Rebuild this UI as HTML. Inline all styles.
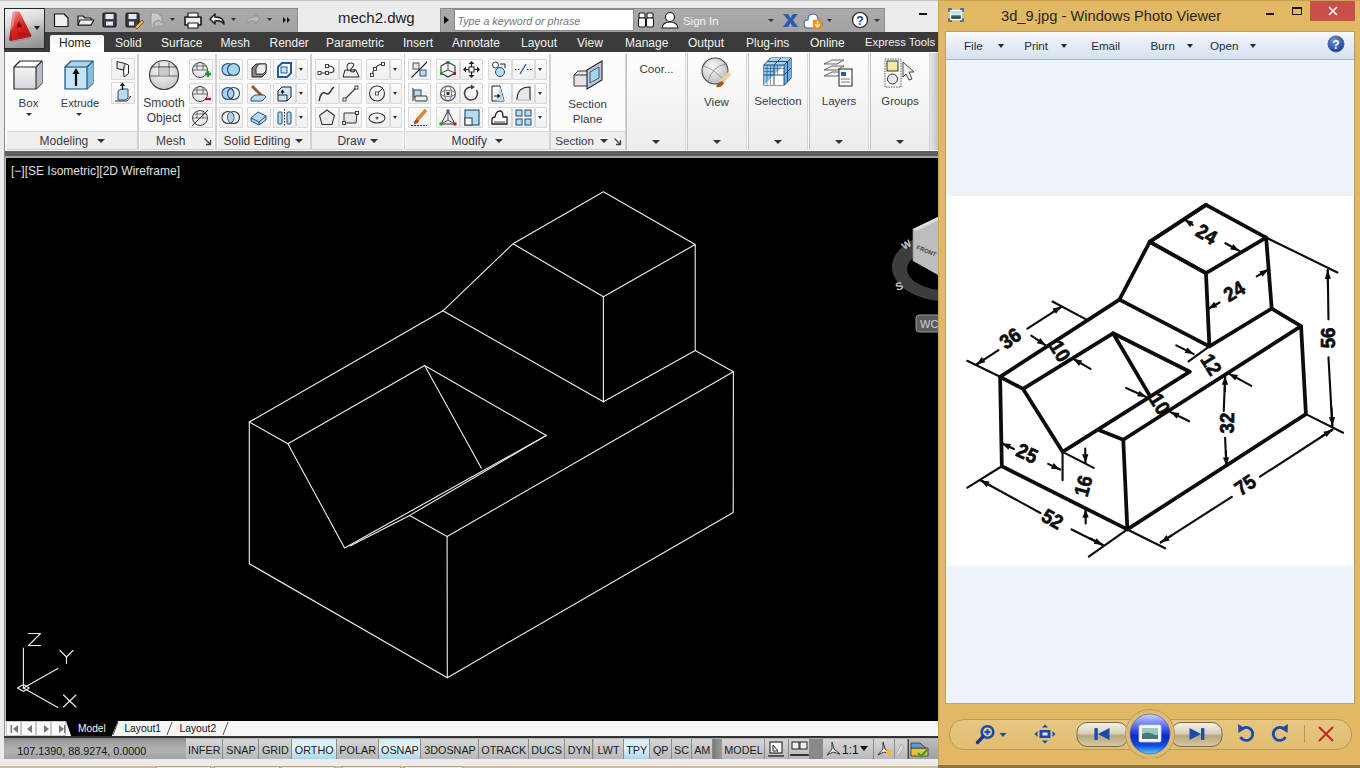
<!DOCTYPE html>
<html><head><meta charset="utf-8">
<style>
*{margin:0;padding:0;box-sizing:border-box}
html,body{width:1360px;height:768px;overflow:hidden;background:#ececec;font-family:"Liberation Sans",sans-serif;position:relative}
.a{position:absolute}
.t{position:absolute;white-space:nowrap;line-height:1}
</style></head><body>
<div class="a" style="left:0;top:0;width:938px;height:1px;background:#c4c4c4"></div>
<div class="a" style="left:45px;top:8px;width:253px;height:24px;background:linear-gradient(#aaaaaa,#a3a3a3);border-top:1px solid #8a8a8a;border-right:1px solid #8e8e8e"></div>
<svg class="a" style="left:45px;top:8px" width="253" height="24" viewBox="0 0 253 24">
      <g stroke="#1a1a1a" stroke-width="1.2" fill="#eef0f4" stroke-linejoin="round">
        <path d="M9.5,6 H19 L23,10 V18.5 H9.5 Z"/>
        <path d="M33,8 H38 L40,10 H46 V17 H33 Z" fill="#d8dade"/><path d="M35,12 H49 L46,17 H33 Z"/>
        <rect x="58" y="5" width="13" height="14" rx="1.5" fill="#3a3d48"/><rect x="60.5" y="6" width="8" height="5" fill="#e4e8f0" stroke="none"/><rect x="61" y="13.5" width="7" height="4" fill="#e4e8f0" stroke="none"/>
        <rect x="81" y="5" width="13" height="14" rx="1.5" fill="#3a3d48"/><rect x="83.5" y="6" width="8" height="5" fill="#e4e8f0" stroke="none"/><rect x="84" y="13.5" width="5" height="4" fill="#e4e8f0" stroke="none"/>
        <path d="M90,19 L97,12 L99,14 L92,21 Z" fill="#f0b030" stroke="#6a4a10" stroke-width="0.8"/>
        <path d="M106,5 H113 L117,9 V19 H106 Z" fill="#c8c8c8" stroke="#9a9a9a"/><path d="M110,14 Q113,11 116,14 Q120,14 119,18 H109 Q107,17 110,14Z" fill="#bdbdbd" stroke="#9a9a9a"/>
        <path d="M140,9 H156 V17 H140 Z" fill="#eee" stroke-width="1.6"/><rect x="143" y="5" width="10" height="4" fill="#fff"/><rect x="143" y="15" width="10" height="5" fill="#fff"/>
        <path d="M165,11 L170,6 V9 Q179,9 179,16 Q176,12 170,13 V16 Z" fill="#f4f4f4" stroke-width="1.4"/>
        <path d="M215,11 L210,6 V9 Q201,9 201,16 Q204,12 210,13 V16 Z" fill="#bdbdbd" stroke="#9a9a9a"/>
      </g>
      <g fill="#333">
        <path d="M125,10 h5 l-2.5,3z"/><path d="M186,10 h5 l-2.5,3z"/><path d="M222,10 h5 l-2.5,3z"/>
        <path d="M238,9 l3,3 l-3,3z M242,9 l3,3 l-3,3z" fill="#111"/>
      </g>
    </svg>
<div class="t" style="left:338px;top:9.9px;font-size:15px;color:#1a1a1a;">mech2.dwg</div>
<div class="a" style="left:440px;top:8px;width:445px;height:24px;background:linear-gradient(#aaaaaa,#a3a3a3);border-top:1px solid #8a8a8a;border-left:1px solid #8e8e8e;border-right:1px solid #8e8e8e"></div>
<div class="a" style="left:444px;top:16px;width:0;height:0;border-top:4px solid transparent;border-bottom:4px solid transparent;border-left:5px solid #111"></div>
<div class="a" style="left:454px;top:9px;width:180px;height:21.5px;background:#fff;border:1px solid #8a8a8a"></div>
<div class="t" style="left:457.5px;top:16.4px;font-size:10.7px;color:#767676;font-style:italic">Type a keyword or phrase</div>
<svg class="a" style="left:630px;top:8px" width="260" height="24" viewBox="0 0 260 24">
      <g stroke="#1a1a1a" stroke-width="1.1" fill="#fff">
        <rect x="9" y="5" width="6" height="5" rx="1"/><rect x="17" y="5" width="6" height="5" rx="1"/>
        <rect x="8.5" y="10" width="7" height="9" rx="1.5"/><rect x="16.5" y="10" width="7" height="9" rx="1.5"/>
        <circle cx="40" cy="9" r="4.5"/><path d="M32,20 Q33,14 40,14 Q47,14 48,20 Z"/>
      </g>
      <path d="M138,11 h6 l-3,3z" fill="#333"/>
      <path d="M153,6 h5 l2.5,4 l2.5,-4 h5 l-5,6 l5,7 h-5 l-2.5,-4 l-2.5,4 h-5 l5,-7z" fill="#2a5db0"/>
      <path d="M178,12 q0,-6 5,-6 q5,0 5,6 q4,0 4,4 q0,4 -4,4 h-10 q-4,0 -4,-4 q0,-4 4,-4z" fill="#fff" stroke="#3a66b0" stroke-width="1.1"/>
      <rect x="183" y="12" width="9" height="9" fill="#f08a20"/><path d="M187.5,13 v5 M185,16 l2.5,3 l2.5,-3" stroke="#fff" stroke-width="1.3" fill="none"/>
      <path d="M197,11 h5 l-2.5,3z" fill="#333"/>
      <circle cx="230" cy="12" r="7.5" fill="#fff" stroke="#1a1a1a" stroke-width="1.2"/>
      <text x="230" y="16.5" font-family="Liberation Sans" font-weight="bold" font-size="12" text-anchor="middle" fill="#1a3a8a">?</text>
      <path d="M244,11 h6 l-3,3z" fill="#333"/>
    </svg>
<div class="t" style="left:683px;top:15.8px;font-size:11.4px;color:#f4f4f4;">Sign In</div>
<div class="a" style="left:919px;top:13px;width:8px;height:2px;background:#111"></div>
<div class="a" style="left:4px;top:32px;width:934px;height:20px;background:#3b3b3b"></div>
<div class="a" style="left:50px;top:35px;width:54px;height:17px;background:linear-gradient(#f4f4f4,#ffffff);border-radius:2px 2px 0 0"></div>
<div class="t" style="left:59px;top:36.8px;font-size:12px;color:#1e1e2a;">Home</div>
<div class="a" style="left:4px;top:8px;width:41px;height:41px;background:linear-gradient(165deg,#f4f4f4,#dcdcdc 35%,#b4b4b4 60%,#9a9a9a 85%,#8e8e8e);border:1.5px solid #262626"></div>
<svg class="a" style="left:0;top:0" width="50" height="50" viewBox="0 0 50 50">
      <defs><linearGradient id="ag" x1="0" y1="0" x2="0.5" y2="1"><stop offset="0" stop-color="#f6a8a8"/><stop offset="0.35" stop-color="#e45050"/><stop offset="0.6" stop-color="#d82424"/><stop offset="1" stop-color="#b81818"/></linearGradient></defs>
      <path d="M10,41.5 L30,37.5 L31,38.5 L11,42.5Z" fill="#7a5a5a" opacity="0.35"/>
      <path d="M12.5,12.5 Q13,11.5 15,11.5 H18.5 Q19.5,11.5 20,12.5 L31.5,35.5 Q31.5,36.5 30,37 L11,41 Q9,41 9.2,39.5 Z" fill="url(#ag)"/>
      <path d="M12.5,12.5 Q13,11.5 15,11.5 L14,24 L10.5,31Z" fill="#f8b8b8" opacity="0.5"/>
      <path d="M16.5,27.5 L18.5,21 L22.5,27 Z" fill="#8a0c0c"/>
      <path d="M17.5,33 L24.5,32 L25.5,36.5 L18.5,37.5 Z" fill="#b81414"/>
      <path d="M9.2,39.5 L11,30 L12,40.5Z" fill="#8a0c0c" opacity="0.5"/>
    </svg>
<div class="a" style="left:34.0px;top:25.5px;width:0;height:0;border-left:3.5px solid transparent;border-right:3.5px solid transparent;border-top:4px solid #1e1e1e"></div>
<div class="t" style="left:115px;top:36.8px;font-size:12px;color:#f2f2f2;">Solid</div>
<div class="t" style="left:161px;top:36.8px;font-size:12px;color:#f2f2f2;">Surface</div>
<div class="t" style="left:220.5px;top:36.8px;font-size:12px;color:#f2f2f2;">Mesh</div>
<div class="t" style="left:269.5px;top:36.8px;font-size:12px;color:#f2f2f2;">Render</div>
<div class="t" style="left:326px;top:36.8px;font-size:12px;color:#f2f2f2;">Parametric</div>
<div class="t" style="left:403px;top:36.8px;font-size:12px;color:#f2f2f2;">Insert</div>
<div class="t" style="left:452px;top:36.8px;font-size:12px;color:#f2f2f2;">Annotate</div>
<div class="t" style="left:521px;top:36.8px;font-size:12px;color:#f2f2f2;">Layout</div>
<div class="t" style="left:577px;top:36.8px;font-size:12px;color:#f2f2f2;">View</div>
<div class="t" style="left:625px;top:36.8px;font-size:12px;color:#f2f2f2;">Manage</div>
<div class="t" style="left:688px;top:36.8px;font-size:12px;color:#f2f2f2;">Output</div>
<div class="t" style="left:746px;top:36.8px;font-size:12px;color:#f2f2f2;">Plug-ins</div>
<div class="t" style="left:810px;top:36.8px;font-size:12px;color:#f2f2f2;">Online</div>
<div class="t" style="left:865px;top:37.4px;font-size:11.3px;color:#f2f2f2;">Express Tools</div>
<div class="a" style="left:4px;top:52px;width:934px;height:99px;background:#fcfcfc"></div>
<div class="a" style="left:4px;top:52px;width:1px;height:99px;background:#8c8c8c"></div>
<div class="a" style="left:7px;top:131px;width:129.5px;height:18.5px;background:#efefef;border-top:1px solid #d8d8d8;border-bottom:1px solid #cfcfcf"></div>
<div class="a" style="left:139.5px;top:131px;width:74.5px;height:18.5px;background:#efefef;border-top:1px solid #d8d8d8;border-bottom:1px solid #cfcfcf"></div>
<div class="a" style="left:217.5px;top:131px;width:92.0px;height:18.5px;background:#efefef;border-top:1px solid #d8d8d8;border-bottom:1px solid #cfcfcf"></div>
<div class="a" style="left:312px;top:131px;width:91px;height:18.5px;background:#efefef;border-top:1px solid #d8d8d8;border-bottom:1px solid #cfcfcf"></div>
<div class="a" style="left:406px;top:131px;width:142.5px;height:18.5px;background:#efefef;border-top:1px solid #d8d8d8;border-bottom:1px solid #cfcfcf"></div>
<div class="a" style="left:551px;top:131px;width:73.5px;height:18.5px;background:#efefef;border-top:1px solid #d8d8d8;border-bottom:1px solid #cfcfcf"></div>
<div class="a" style="left:137.0px;top:54px;width:1.5px;height:96px;background:#d0d0d0"></div>
<div class="a" style="left:215.0px;top:54px;width:1.5px;height:96px;background:#d0d0d0"></div>
<div class="a" style="left:310.0px;top:54px;width:1.5px;height:96px;background:#d0d0d0"></div>
<div class="a" style="left:403.5px;top:54px;width:1.5px;height:96px;background:#d0d0d0"></div>
<div class="a" style="left:549.0px;top:54px;width:1.5px;height:96px;background:#d0d0d0"></div>
<div class="a" style="left:624.5px;top:54px;width:1.5px;height:96px;background:#d0d0d0"></div>
<div class="t" style="left:39.6px;top:134.5px;font-size:12px;color:#3a3a44;">Modeling</div>
<div class="a" style="left:96.5px;top:139.0px;width:0;height:0;border-left:4.0px solid transparent;border-right:4.0px solid transparent;border-top:4px solid #333"></div>
<div class="t" style="left:156px;top:134.5px;font-size:12px;color:#3a3a44;">Mesh</div>
<svg class="a" style="left:203px;top:137px" width="9" height="9" viewBox="0 0 9 9"><path d="M1.5,1.5 L7,7 M3,7.5 H7.5 V3" stroke="#444" stroke-width="1.3" fill="none"/></svg>
<div class="t" style="left:223.6px;top:134.5px;font-size:12px;color:#3a3a44;">Solid Editing</div>
<div class="a" style="left:294.8px;top:139.0px;width:0;height:0;border-left:4.0px solid transparent;border-right:4.0px solid transparent;border-top:4px solid #333"></div>
<div class="t" style="left:337.4px;top:134.5px;font-size:12px;color:#3a3a44;">Draw</div>
<div class="a" style="left:370.0px;top:139.0px;width:0;height:0;border-left:4.0px solid transparent;border-right:4.0px solid transparent;border-top:4px solid #333"></div>
<div class="t" style="left:451.6px;top:134.5px;font-size:12px;color:#3a3a44;">Modify</div>
<div class="a" style="left:495.0px;top:139.0px;width:0;height:0;border-left:4.0px solid transparent;border-right:4.0px solid transparent;border-top:4px solid #333"></div>
<div class="t" style="left:555.3px;top:134.9px;font-size:11.6px;color:#3a3a44;">Section</div>
<div class="a" style="left:600.0px;top:139.0px;width:0;height:0;border-left:4.0px solid transparent;border-right:4.0px solid transparent;border-top:4px solid #333"></div>
<svg class="a" style="left:613px;top:137px" width="9" height="9" viewBox="0 0 9 9"><path d="M1.5,1.5 L7,7 M3,7.5 H7.5 V3" stroke="#444" stroke-width="1.3" fill="none"/></svg>
<svg class="a" style="left:12px;top:59px" width="33" height="33" viewBox="0 0 33 33">
      <path d="M2,8 L8,2 H30 V24 L24,30 H2 Z" fill="#fff" stroke="#222" stroke-width="1.2" stroke-linejoin="round"/>
      <path d="M3,9 H23 V29 H3 Z" fill="url(#gbox)"/>
      <path d="M24,8 L30,2 V24 L24,30 Z" fill="#b8bcc4"/>
      <path d="M2,8 H24 V30 M24,8 L30,2" stroke="#222" stroke-width="1.1" fill="none"/>
      <defs><linearGradient id="gbox" x1="0" y1="0" x2="0" y2="1"><stop offset="0" stop-color="#f4f4f6"/><stop offset="1" stop-color="#d4d6dc"/></linearGradient></defs></svg>
<div class="t" style="left:-71.5px;width:200px;text-align:center;top:97.7px;font-size:11.5px;color:#3a3a44;">Box</div>
<div class="a" style="left:25.5px;top:112.75px;width:0;height:0;border-left:3.0px solid transparent;border-right:3.0px solid transparent;border-top:3.5px solid #333"></div>
<svg class="a" style="left:63px;top:59px" width="33" height="33" viewBox="0 0 33 33">
      <path d="M2,8 L8,2 H30 V24 L24,30 H2 Z" fill="#a8d4ec" stroke="#1f4f7a" stroke-width="1.2" stroke-linejoin="round"/>
      <path d="M3,9 H23 V29 H3 Z" fill="#c6e4f4"/>
      <path d="M24,8 L30,2 V24 L24,30 Z" fill="#86bcdc"/>
      <path d="M2,8 H24 V30 M24,8 L30,2" stroke="#1f4f7a" stroke-width="1.1" fill="none"/>
      <path d="M13,27 V14" stroke="#111" stroke-width="2.2"/><path d="M9.5,15 L13,9 L16.5,15 Z" fill="#111"/></svg>
<div class="t" style="left:-20px;width:200px;text-align:center;top:97.9px;font-size:11.2px;color:#3a3a44;">Extrude</div>
<div class="a" style="left:76.0px;top:112.75px;width:0;height:0;border-left:3.0px solid transparent;border-right:3.0px solid transparent;border-top:3.5px solid #333"></div>
<div class="a" style="left:111px;top:58px;width:24px;height:22px;border:1px solid #d9d9d9;background:linear-gradient(#fbfbfb,#efefef);border-radius:1px"></div>
<div class="a" style="left:111px;top:82px;width:24px;height:22px;border:1px solid #d9d9d9;background:linear-gradient(#fbfbfb,#efefef);border-radius:1px"></div>
<svg class="a" style="left:111px;top:58px" width="24" height="22" viewBox="0 0 24 22"><path d="M6,3.5 L14,5.5 L12.5,12 L6,10.5 Z" fill="#e2e4e8" stroke="#222" stroke-width="1" stroke-linejoin="round"/><path d="M14,5.5 L17.5,7 V15.5 L13,19 L12.5,12 Z" fill="#fafafa" stroke="#222" stroke-width="1" stroke-linejoin="round"/><path d="M14,5.5 L13.5,12" stroke="#999" stroke-width="0.8"/></svg>
<svg class="a" style="left:111px;top:82px" width="24" height="22" viewBox="0 0 24 22"><path d="M7,9 L10,7 H17 V16 L14,18 H7 Z" fill="#b6dcf0" stroke="#245" stroke-width="0.9"/><path d="M11.5,8 V2 M9.5,4 L11.5,1.5 L13.5,4" stroke="#111" stroke-width="1.3" fill="none"/><path d="M4,19 H16 L20,14" stroke="#222" stroke-width="0.9" fill="none"/></svg>
<svg class="a" style="left:148px;top:59px" width="32" height="32" viewBox="0 0 32 32">
      <defs><radialGradient id="gsph" cx="0.45" cy="0.35" r="0.7"><stop offset="0" stop-color="#fafafa"/><stop offset="1" stop-color="#c4c6cc"/></radialGradient></defs>
      <circle cx="16" cy="16" r="14.5" fill="url(#gsph)" stroke="#444" stroke-width="1.2"/>
      <path d="M2,17 H30 M10,8 H22 M11,3.5 V17 M21,3.5 V17 M3,8 H29" stroke="#555" stroke-width="0.9" fill="none"/>
      <rect x="11.5" y="8.5" width="9" height="8" fill="#c8cacf"/></svg>
<div class="t" style="left:64px;width:200px;text-align:center;top:97.2px;font-size:12px;color:#3a3a44;">Smooth</div>
<div class="t" style="left:64px;width:200px;text-align:center;top:111.8px;font-size:12px;color:#3a3a44;">Object</div>
<div class="a" style="left:189px;top:58.5px;width:24px;height:21.0px;border:1px solid #d9d9d9;background:linear-gradient(#fbfbfb,#efefef);border-radius:1px"></div>
<div class="a" style="left:189px;top:82.5px;width:24px;height:21.0px;border:1px solid #d9d9d9;background:linear-gradient(#fbfbfb,#efefef);border-radius:1px"></div>
<div class="a" style="left:189px;top:106.5px;width:24px;height:21.0px;border:1px solid #d9d9d9;background:linear-gradient(#fbfbfb,#efefef);border-radius:1px"></div>
<svg class="a" style="left:189px;top:58.5px" width="24" height="21" viewBox="0 0 24 21"><circle cx="11" cy="11" r="7.5" fill="#e8e9ec" stroke="#444" stroke-width="1"/><path d="M3.5,11 H18.5 M4.5,7 H17.5 M8,4 V11 M14,4 V11" stroke="#555" stroke-width="0.8"/><path d="M16,15 H22 M19,12 V18" stroke="#1c9a2a" stroke-width="2.4"/></svg>
<svg class="a" style="left:189px;top:82.5px" width="24" height="21" viewBox="0 0 24 21"><circle cx="11" cy="11" r="7.5" fill="#e8e9ec" stroke="#444" stroke-width="1"/><path d="M3.5,11 H18.5 M4.5,7 H17.5 M8,4 V11 M14,4 V11" stroke="#555" stroke-width="0.8"/><path d="M16,16 H22" stroke="#c01818" stroke-width="2.4"/></svg>
<svg class="a" style="left:189px;top:106.5px" width="24" height="21" viewBox="0 0 24 21"><circle cx="11" cy="11" r="7.5" fill="#eee" stroke="#444" stroke-width="1"/><path d="M3.5,11 H18.5 M4.5,7 H17.5 M8,4 V11 M14,4 V11" stroke="#555" stroke-width="0.8"/><path d="M3,19 L19,3" stroke="#333" stroke-width="1"/></svg>
<div class="a" style="left:219px;top:58.5px;width:23.5px;height:21.0px;border:1px solid #d9d9d9;background:linear-gradient(#fbfbfb,#efefef);border-radius:1px"></div>
<div class="a" style="left:247px;top:58.5px;width:23.5px;height:21.0px;border:1px solid #d9d9d9;background:linear-gradient(#fbfbfb,#efefef);border-radius:1px"></div>
<div class="a" style="left:272.5px;top:58.5px;width:23.0px;height:21.0px;border:1px solid #d9d9d9;background:linear-gradient(#fbfbfb,#efefef);border-radius:1px"></div>
<div class="a" style="left:295.5px;top:58.5px;width:12.0px;height:21.0px;border:1px solid #d9d9d9;background:linear-gradient(#fbfbfb,#efefef);border-radius:1px"></div>
<div class="a" style="left:299.0px;top:67.5px;width:0;height:0;border-left:2.5px solid transparent;border-right:2.5px solid transparent;border-top:3px solid #333"></div>
<div class="a" style="left:219px;top:82.5px;width:23.5px;height:21.0px;border:1px solid #d9d9d9;background:linear-gradient(#fbfbfb,#efefef);border-radius:1px"></div>
<div class="a" style="left:247px;top:82.5px;width:23.5px;height:21.0px;border:1px solid #d9d9d9;background:linear-gradient(#fbfbfb,#efefef);border-radius:1px"></div>
<div class="a" style="left:272.5px;top:82.5px;width:23.0px;height:21.0px;border:1px solid #d9d9d9;background:linear-gradient(#fbfbfb,#efefef);border-radius:1px"></div>
<div class="a" style="left:295.5px;top:82.5px;width:12.0px;height:21.0px;border:1px solid #d9d9d9;background:linear-gradient(#fbfbfb,#efefef);border-radius:1px"></div>
<div class="a" style="left:299.0px;top:91.5px;width:0;height:0;border-left:2.5px solid transparent;border-right:2.5px solid transparent;border-top:3px solid #333"></div>
<div class="a" style="left:219px;top:106.5px;width:23.5px;height:21.0px;border:1px solid #d9d9d9;background:linear-gradient(#fbfbfb,#efefef);border-radius:1px"></div>
<div class="a" style="left:247px;top:106.5px;width:23.5px;height:21.0px;border:1px solid #d9d9d9;background:linear-gradient(#fbfbfb,#efefef);border-radius:1px"></div>
<div class="a" style="left:272.5px;top:106.5px;width:23.0px;height:21.0px;border:1px solid #d9d9d9;background:linear-gradient(#fbfbfb,#efefef);border-radius:1px"></div>
<div class="a" style="left:295.5px;top:106.5px;width:12.0px;height:21.0px;border:1px solid #d9d9d9;background:linear-gradient(#fbfbfb,#efefef);border-radius:1px"></div>
<div class="a" style="left:299.0px;top:115.5px;width:0;height:0;border-left:2.5px solid transparent;border-right:2.5px solid transparent;border-top:3px solid #333"></div>
<svg class="a" style="left:219px;top:58.5px" width="24" height="21" viewBox="0 0 24 21"><g stroke="#1e4a78" stroke-width="1.1"><circle cx="9" cy="10.5" r="6" fill="#a9d3ee"/><circle cx="14.5" cy="10.5" r="6" fill="#a9d3ee"/></g></svg>
<svg class="a" style="left:219px;top:82.5px" width="24" height="21" viewBox="0 0 24 21"><g stroke="#1e4a78" stroke-width="1.1"><circle cx="9" cy="10.5" r="6" fill="#a9d3ee"/><circle cx="14.5" cy="10.5" r="6" fill="none"/></g></svg>
<svg class="a" style="left:219px;top:106.5px" width="24" height="21" viewBox="0 0 24 21"><g stroke="#333" stroke-width="1.1" fill="none"><circle cx="9" cy="10.5" r="6"/><circle cx="14.5" cy="10.5" r="6"/></g><path d="M11.7,5.3 A6,6 0 0 1 11.7,15.7 A6,6 0 0 1 11.7,5.3Z" fill="#a9d3ee"/></svg>
<svg class="a" style="left:247px;top:58.5px" width="24" height="21" viewBox="0 0 24 21"><path d="M5,9 L9,5 H19 V14 L15,18 H5 Z" fill="#888" stroke="#222" stroke-width="1"/><path d="M9,9 L12,5 H19 V12 L16,15 H9Z" fill="#eee" stroke="#222" stroke-width="0.9"/></svg>
<svg class="a" style="left:247px;top:82.5px" width="24" height="21" viewBox="0 0 24 21"><path d="M5,3 L15,13" stroke="#8a5a3a" stroke-width="3"/><path d="M4,15 L8,12 H17 L19,14 L15,18 H4Z" fill="#b6dcf0" stroke="#245" stroke-width="0.9"/></svg>
<svg class="a" style="left:247px;top:106.5px" width="24" height="21" viewBox="0 0 24 21"><path d="M4,11 L11,5 L19,9 V13 L12,18 L4,14 Z" fill="#b6dcf0" stroke="#1e4a78" stroke-width="1"/><path d="M4,11 L12,15 L19,9 M12,15 V18" stroke="#1e4a78" stroke-width="1" fill="none"/></svg>
<svg class="a" style="left:272.5px;top:58.5px" width="23" height="21" viewBox="0 0 23 21"><path d="M5,8 L9,4 H18 V14 L14,18 H5 Z" fill="#fff" stroke="#1e5aa0" stroke-width="2"/><rect x="8" y="8" width="6" height="6" fill="#cde6f6" stroke="#1e5aa0" stroke-width="1"/></svg>
<svg class="a" style="left:272.5px;top:82.5px" width="23" height="21" viewBox="0 0 23 21"><path d="M5,8 L9,4 H18 V14 L14,18 H5 Z" fill="#cde6f6" stroke="#222" stroke-width="1"/><path d="M5,12 H14 V18" stroke="#222" fill="none"/><path d="M9.5,11 V8 M8,9.5 L9.5,7.5 L11,9.5" stroke="#111" stroke-width="1.2" fill="none"/></svg>
<svg class="a" style="left:272.5px;top:106.5px" width="23" height="21" viewBox="0 0 23 21"><rect x="5" y="5" width="4" height="12" rx="1" fill="#b6dcf0" stroke="#1e4a78"/><rect x="14" y="5" width="4" height="12" rx="1" fill="#b6dcf0" stroke="#1e4a78"/><path d="M11.5,2 V20" stroke="#222" stroke-dasharray="1.5,1.5"/></svg>
<div class="a" style="left:314.5px;top:58.5px;width:24.0px;height:21.0px;border:1px solid #d9d9d9;background:linear-gradient(#fbfbfb,#efefef);border-radius:1px"></div>
<div class="a" style="left:339px;top:58.5px;width:23px;height:21.0px;border:1px solid #d9d9d9;background:linear-gradient(#fbfbfb,#efefef);border-radius:1px"></div>
<div class="a" style="left:366px;top:58.5px;width:23.5px;height:21.0px;border:1px solid #d9d9d9;background:linear-gradient(#fbfbfb,#efefef);border-radius:1px"></div>
<div class="a" style="left:389.5px;top:58.5px;width:12.0px;height:21.0px;border:1px solid #d9d9d9;background:linear-gradient(#fbfbfb,#efefef);border-radius:1px"></div>
<div class="a" style="left:393.0px;top:67.5px;width:0;height:0;border-left:2.5px solid transparent;border-right:2.5px solid transparent;border-top:3px solid #333"></div>
<div class="a" style="left:314.5px;top:82.5px;width:24.0px;height:21.0px;border:1px solid #d9d9d9;background:linear-gradient(#fbfbfb,#efefef);border-radius:1px"></div>
<div class="a" style="left:339px;top:82.5px;width:23px;height:21.0px;border:1px solid #d9d9d9;background:linear-gradient(#fbfbfb,#efefef);border-radius:1px"></div>
<div class="a" style="left:366px;top:82.5px;width:23.5px;height:21.0px;border:1px solid #d9d9d9;background:linear-gradient(#fbfbfb,#efefef);border-radius:1px"></div>
<div class="a" style="left:389.5px;top:82.5px;width:12.0px;height:21.0px;border:1px solid #d9d9d9;background:linear-gradient(#fbfbfb,#efefef);border-radius:1px"></div>
<div class="a" style="left:393.0px;top:91.5px;width:0;height:0;border-left:2.5px solid transparent;border-right:2.5px solid transparent;border-top:3px solid #333"></div>
<div class="a" style="left:314.5px;top:106.5px;width:24.0px;height:21.0px;border:1px solid #d9d9d9;background:linear-gradient(#fbfbfb,#efefef);border-radius:1px"></div>
<div class="a" style="left:339px;top:106.5px;width:23px;height:21.0px;border:1px solid #d9d9d9;background:linear-gradient(#fbfbfb,#efefef);border-radius:1px"></div>
<div class="a" style="left:366px;top:106.5px;width:23.5px;height:21.0px;border:1px solid #d9d9d9;background:linear-gradient(#fbfbfb,#efefef);border-radius:1px"></div>
<div class="a" style="left:389.5px;top:106.5px;width:12.0px;height:21.0px;border:1px solid #d9d9d9;background:linear-gradient(#fbfbfb,#efefef);border-radius:1px"></div>
<div class="a" style="left:393.0px;top:115.5px;width:0;height:0;border-left:2.5px solid transparent;border-right:2.5px solid transparent;border-top:3px solid #333"></div>
<svg class="a" style="left:314.5px;top:58.5px" width="24" height="21" viewBox="0 0 24 21"><path d="M5,14 H12 M13,7 Q19,7 19,11 Q19,14 13,14" stroke="#333" stroke-width="1.1" fill="none"/><g fill="#fff" stroke="#333" stroke-width="0.9"><rect x="3" y="12.5" width="3" height="3"/><rect x="10.5" y="12.5" width="3" height="3"/><rect x="10.5" y="5.5" width="3" height="3"/></g></svg>
<svg class="a" style="left:339px;top:58.5px" width="23" height="21" viewBox="0 0 23 21"><path d="M4,18 L6,11 H17 L20,18 Z" fill="#ececec" stroke="#222" stroke-width="1"/><path d="M9,12 Q6,4 12,4 Q17,4 13,9 Q9,12 14,13 Q17,12 15,10" stroke="#333" stroke-width="1.1" fill="none"/></svg>
<svg class="a" style="left:366px;top:58.5px" width="23.5" height="21" viewBox="0 0 23.5 21"><path d="M6,16 Q8,6 17,5" stroke="#333" stroke-width="1.1" fill="none"/><g fill="#fff" stroke="#333" stroke-width="0.9"><rect x="4.5" y="14.5" width="3" height="3"/><rect x="7.5" y="8.5" width="3" height="3"/><rect x="15.5" y="3.5" width="3" height="3"/></g></svg>
<svg class="a" style="left:314.5px;top:82.5px" width="24" height="21" viewBox="0 0 24 21"><path d="M4,18 Q6,8 10,10 Q14,13 17,6 L19,4" stroke="#333" stroke-width="1.5" fill="none"/></svg>
<svg class="a" style="left:339px;top:82.5px" width="23" height="21" viewBox="0 0 23 21"><path d="M5.5,16.5 L17.5,4.5" stroke="#333" stroke-width="1.1"/><g fill="#fff" stroke="#333" stroke-width="0.9"><rect x="4" y="15" width="3" height="3"/><rect x="16" y="3" width="3" height="3"/></g></svg>
<svg class="a" style="left:366px;top:82.5px" width="23.5" height="21" viewBox="0 0 23.5 21"><circle cx="11" cy="10.5" r="7.5" fill="none" stroke="#333" stroke-width="1.1"/><path d="M11,10.5 L16,6" stroke="#333"/><rect x="9.5" y="9" width="3" height="3" fill="#fff" stroke="#333" stroke-width="0.8"/></svg>
<svg class="a" style="left:314.5px;top:106.5px" width="24" height="21" viewBox="0 0 24 21"><path d="M12,3 L19.5,8.5 L17,17.5 H7 L4.5,8.5 Z" fill="#ececec" stroke="#333" stroke-width="1.1"/></svg>
<svg class="a" style="left:339px;top:106.5px" width="23" height="21" viewBox="0 0 23 21"><path d="M5,6 H18 L17,16 H5 Z" fill="#e6e6e6" stroke="#333" stroke-width="1"/><g fill="#fff" stroke="#333" stroke-width="0.9"><rect x="3.5" y="14.5" width="3" height="3"/><rect x="16.5" y="4.5" width="3" height="3"/></g></svg>
<svg class="a" style="left:366px;top:106.5px" width="23.5" height="21" viewBox="0 0 23.5 21"><ellipse cx="11" cy="11" rx="8" ry="5" fill="none" stroke="#333" stroke-width="1.1"/><path d="M9.5,11 h3 M11,9.5 v3" stroke="#333"/></svg>
<div class="a" style="left:407.5px;top:58.5px;width:23.0px;height:21.0px;border:1px solid #d9d9d9;background:linear-gradient(#fbfbfb,#efefef);border-radius:1px"></div>
<div class="a" style="left:435.5px;top:58.5px;width:24.0px;height:21.0px;border:1px solid #d9d9d9;background:linear-gradient(#fbfbfb,#efefef);border-radius:1px"></div>
<div class="a" style="left:459.5px;top:58.5px;width:23.0px;height:21.0px;border:1px solid #d9d9d9;background:linear-gradient(#fbfbfb,#efefef);border-radius:1px"></div>
<div class="a" style="left:487.5px;top:58.5px;width:24.0px;height:21.0px;border:1px solid #d9d9d9;background:linear-gradient(#fbfbfb,#efefef);border-radius:1px"></div>
<div class="a" style="left:511.5px;top:58.5px;width:23.0px;height:21.0px;border:1px solid #d9d9d9;background:linear-gradient(#fbfbfb,#efefef);border-radius:1px"></div>
<div class="a" style="left:534.5px;top:58.5px;width:12.0px;height:21.0px;border:1px solid #d9d9d9;background:linear-gradient(#fbfbfb,#efefef);border-radius:1px"></div>
<div class="a" style="left:538.0px;top:67.5px;width:0;height:0;border-left:2.5px solid transparent;border-right:2.5px solid transparent;border-top:3px solid #333"></div>
<div class="a" style="left:407.5px;top:82.5px;width:23.0px;height:21.0px;border:1px solid #d9d9d9;background:linear-gradient(#fbfbfb,#efefef);border-radius:1px"></div>
<div class="a" style="left:435.5px;top:82.5px;width:24.0px;height:21.0px;border:1px solid #d9d9d9;background:linear-gradient(#fbfbfb,#efefef);border-radius:1px"></div>
<div class="a" style="left:459.5px;top:82.5px;width:23.0px;height:21.0px;border:1px solid #d9d9d9;background:linear-gradient(#fbfbfb,#efefef);border-radius:1px"></div>
<div class="a" style="left:487.5px;top:82.5px;width:24.0px;height:21.0px;border:1px solid #d9d9d9;background:linear-gradient(#fbfbfb,#efefef);border-radius:1px"></div>
<div class="a" style="left:511.5px;top:82.5px;width:23.0px;height:21.0px;border:1px solid #d9d9d9;background:linear-gradient(#fbfbfb,#efefef);border-radius:1px"></div>
<div class="a" style="left:534.5px;top:82.5px;width:12.0px;height:21.0px;border:1px solid #d9d9d9;background:linear-gradient(#fbfbfb,#efefef);border-radius:1px"></div>
<div class="a" style="left:538.0px;top:91.5px;width:0;height:0;border-left:2.5px solid transparent;border-right:2.5px solid transparent;border-top:3px solid #333"></div>
<div class="a" style="left:407.5px;top:106.5px;width:23.0px;height:21.0px;border:1px solid #d9d9d9;background:linear-gradient(#fbfbfb,#efefef);border-radius:1px"></div>
<div class="a" style="left:435.5px;top:106.5px;width:24.0px;height:21.0px;border:1px solid #d9d9d9;background:linear-gradient(#fbfbfb,#efefef);border-radius:1px"></div>
<div class="a" style="left:459.5px;top:106.5px;width:23.0px;height:21.0px;border:1px solid #d9d9d9;background:linear-gradient(#fbfbfb,#efefef);border-radius:1px"></div>
<div class="a" style="left:487.5px;top:106.5px;width:24.0px;height:21.0px;border:1px solid #d9d9d9;background:linear-gradient(#fbfbfb,#efefef);border-radius:1px"></div>
<div class="a" style="left:511.5px;top:106.5px;width:23.0px;height:21.0px;border:1px solid #d9d9d9;background:linear-gradient(#fbfbfb,#efefef);border-radius:1px"></div>
<div class="a" style="left:534.5px;top:106.5px;width:12.0px;height:21.0px;border:1px solid #d9d9d9;background:linear-gradient(#fbfbfb,#efefef);border-radius:1px"></div>
<div class="a" style="left:538.0px;top:115.5px;width:0;height:0;border-left:2.5px solid transparent;border-right:2.5px solid transparent;border-top:3px solid #333"></div>
<svg class="a" style="left:407.5px;top:58.5px" width="23" height="21" viewBox="0 0 23 21"><rect x="5" y="4" width="6" height="6" fill="#e8e8e8" stroke="#444" stroke-width="0.9"/><rect x="12" y="11" width="6" height="6" fill="#b6dcf0" stroke="#1e4a78" stroke-width="0.9"/><path d="M3.5,18.5 L19,3" stroke="#222" stroke-width="1.1"/></svg>
<svg class="a" style="left:435.5px;top:58.5px" width="24" height="21" viewBox="0 0 24 21"><path d="M12,3 L19,7 V14 L12,18 L5,14 V7 Z" fill="none" stroke="#333" stroke-width="1.1"/><path d="M12,3 V11 L5,14 M12,11 L19,14" stroke="#333" stroke-width="0.9" fill="none"/><rect x="10.5" y="2" width="3" height="3" fill="#1e6ab0"/><rect x="4" y="13" width="3" height="3" fill="#1c9a2a"/><rect x="17" y="13" width="3" height="3" fill="#c01818"/></svg>
<svg class="a" style="left:459.5px;top:58.5px" width="23" height="21" viewBox="0 0 23 21"><path d="M11.5,3 V18 M4,10.5 H19" stroke="#222" stroke-width="1.2"/><path d="M8.5,5 L11.5,2 L14.5,5Z M8.5,16 L11.5,19 L14.5,16Z M6,7.5 L3,10.5 L6,13.5Z M17,7.5 L20,10.5 L17,13.5Z" fill="#222"/><rect x="9" y="8" width="5" height="5" fill="#fff" stroke="#222"/></svg>
<svg class="a" style="left:487.5px;top:58.5px" width="24" height="21" viewBox="0 0 24 21"><circle cx="7.5" cy="6" r="3" fill="#fff" stroke="#333" stroke-width="1"/><circle cx="12" cy="13" r="4.5" fill="#b6dcf0" stroke="#1e4a78" stroke-width="1"/><path d="M12,5 H17 V9" stroke="#222" fill="none"/></svg>
<svg class="a" style="left:511.5px;top:58.5px" width="23" height="21" viewBox="0 0 23 21"><path d="M3,10.5 H8 M15,10.5 H20" stroke="#333" stroke-dasharray="1.5,1.5"/><path d="M8,15 L14,5" stroke="#1e4a78" stroke-width="1.2"/></svg>
<svg class="a" style="left:407.5px;top:82.5px" width="23" height="21" viewBox="0 0 23 21"><path d="M5,5 V18" stroke="#333"/><rect x="6" y="7" width="7" height="7" fill="#b6dcf0" stroke="#1e4a78"/><rect x="7" y="13" width="12" height="5" rx="1" fill="#eee" stroke="#333"/></svg>
<svg class="a" style="left:435.5px;top:82.5px" width="24" height="21" viewBox="0 0 24 21"><circle cx="12" cy="10.5" r="7.5" fill="none" stroke="#556" stroke-width="1.2"/><ellipse cx="12" cy="10.5" rx="3.5" ry="7.5" fill="none" stroke="#a44" stroke-width="0.9"/><ellipse cx="12" cy="10.5" rx="7.5" ry="3" fill="none" stroke="#47a" stroke-width="0.9"/><rect x="10.5" y="9" width="3" height="3" fill="#333"/></svg>
<svg class="a" style="left:459.5px;top:82.5px" width="23" height="21" viewBox="0 0 23 21"><path d="M16.5,7 A6.5,6.5 0 1 1 12,4" fill="none" stroke="#444" stroke-width="1.5"/><path d="M11,1.5 L15,4 L11,6.5Z" fill="#444"/></svg>
<svg class="a" style="left:487.5px;top:82.5px" width="24" height="21" viewBox="0 0 24 21"><path d="M4,3 H12 L16,18 H4 Z" fill="none" stroke="#222" stroke-width="1"/><path d="M12,3 L16,18 H9 Z" fill="#b6dcf0"/><path d="M6,13 H11 M9.5,11.5 L11.5,13 L9.5,14.5" stroke="#111" stroke-width="1.2" fill="none"/></svg>
<svg class="a" style="left:511.5px;top:82.5px" width="23" height="21" viewBox="0 0 23 21"><path d="M5,17 Q5,4 18,4 V17 H5" fill="#e8e8ea" stroke="#222" stroke-width="1.1"/><path d="M5,17 H18" stroke="#fff" stroke-width="1.2"/></svg>
<svg class="a" style="left:407.5px;top:106.5px" width="23" height="21" viewBox="0 0 23 21"><path d="M18,3 L9,13" stroke="#d08a40" stroke-width="3.5"/><path d="M9,12 Q5,14 6,17 Q10,17 11,14Z" fill="#b04a20"/><path d="M3,18.5 H19" stroke="#333" stroke-dasharray="2,1"/></svg>
<svg class="a" style="left:435.5px;top:106.5px" width="24" height="21" viewBox="0 0 24 21"><path d="M12,4 L5,17 H19 Z" fill="none" stroke="#333" stroke-width="1"/><path d="M12,4 V13 L5,17 M12,13 L19,17" stroke="#333" stroke-width="0.8" fill="none"/><rect x="10.5" y="2.5" width="3" height="3" fill="#1e6ab0"/><rect x="3.5" y="15.5" width="3" height="3" fill="#1c9a2a"/><rect x="17.5" y="15.5" width="3" height="3" fill="#c01818"/></svg>
<svg class="a" style="left:459.5px;top:106.5px" width="23" height="21" viewBox="0 0 23 21"><rect x="5" y="3" width="14" height="15" fill="#b6dcf0" stroke="#1e4a78" stroke-width="1.1"/><rect x="5" y="11" width="7" height="7" fill="#fff" stroke="#333" stroke-width="1"/></svg>
<svg class="a" style="left:487.5px;top:106.5px" width="24" height="21" viewBox="0 0 24 21"><path d="M4,17 V13 Q4,10 7,10 Q8,4 12,4 Q15,4 15,10 H19 V17 Z" fill="#fff" stroke="#222" stroke-width="1.3"/><path d="M6,15 H17" stroke="#1e4a78" stroke-width="1"/></svg>
<svg class="a" style="left:511.5px;top:106.5px" width="23" height="21" viewBox="0 0 23 21"><g fill="#b6dcf0" stroke="#1e4a78" stroke-width="1"><rect x="4" y="3" width="6" height="6"/><rect x="13" y="3" width="6" height="6"/><rect x="4" y="12" width="6" height="6"/><rect x="13" y="12" width="6" height="6"/></g></svg>
<svg class="a" style="left:572px;top:58px" width="33" height="33" viewBox="0 0 33 33"><path d="M2,17 L6,13 H20 V24 L16,28 H2Z" fill="#e4e4e6" stroke="#333" stroke-width="1"/><path d="M2,17 H16 V28" stroke="#333" fill="none"/><path d="M15,12 L30,3 V22 L15,31 Z" fill="#c4c8d0" stroke="#222" stroke-width="1.1"/><path d="M18,14 L27,9 V20 L18,25Z" fill="#a8d4ee" stroke="#1e4a78" stroke-width="0.9"/></svg>
<div class="t" style="left:487.5px;width:200px;text-align:center;top:97.7px;font-size:11.6px;color:#3a3a44;">Section</div>
<div class="t" style="left:487.5px;width:200px;text-align:center;top:112.9px;font-size:11.6px;color:#3a3a44;">Plane</div>
<div class="a" style="left:626px;top:53px;width:60px;height:97px;background:linear-gradient(#fdfdfd,#ececee);border-left:1px solid #c2c2c2;border-right:1px solid #d6d6d6"></div>
<div class="a" style="left:652.0px;top:140.25px;width:0;height:0;border-left:4.0px solid transparent;border-right:4.0px solid transparent;border-top:4.5px solid #333"></div>
<div class="a" style="left:687px;top:53px;width:60px;height:97px;background:linear-gradient(#fdfdfd,#ececee);border-left:1px solid #c2c2c2;border-right:1px solid #d6d6d6"></div>
<div class="a" style="left:713.0px;top:140.25px;width:0;height:0;border-left:4.0px solid transparent;border-right:4.0px solid transparent;border-top:4.5px solid #333"></div>
<div class="a" style="left:748px;top:53px;width:60px;height:97px;background:linear-gradient(#fdfdfd,#ececee);border-left:1px solid #c2c2c2;border-right:1px solid #d6d6d6"></div>
<div class="a" style="left:774.0px;top:140.25px;width:0;height:0;border-left:4.0px solid transparent;border-right:4.0px solid transparent;border-top:4.5px solid #333"></div>
<div class="a" style="left:809px;top:53px;width:60px;height:97px;background:linear-gradient(#fdfdfd,#ececee);border-left:1px solid #c2c2c2;border-right:1px solid #d6d6d6"></div>
<div class="a" style="left:835.0px;top:140.25px;width:0;height:0;border-left:4.0px solid transparent;border-right:4.0px solid transparent;border-top:4.5px solid #333"></div>
<div class="a" style="left:870px;top:53px;width:60px;height:97px;background:linear-gradient(#fdfdfd,#ececee);border-left:1px solid #c2c2c2;border-right:1px solid #d6d6d6"></div>
<div class="a" style="left:896.0px;top:140.25px;width:0;height:0;border-left:4.0px solid transparent;border-right:4.0px solid transparent;border-top:4.5px solid #333"></div>
<div class="a" style="left:930px;top:53px;width:8px;height:97px;background:linear-gradient(90deg,#e4e4e4,#c4c4c4)"></div>
<div class="t" style="left:556.5px;width:200px;text-align:center;top:63.2px;font-size:11.6px;color:#3a3a44;">Coor...</div>
<div class="t" style="left:616.5px;width:200px;text-align:center;top:95.6px;font-size:11.6px;color:#3a3a44;">View</div>
<div class="t" style="left:678px;width:200px;text-align:center;top:95.7px;font-size:11.5px;color:#3a3a44;">Selection</div>
<div class="t" style="left:739px;width:200px;text-align:center;top:95.7px;font-size:11.5px;color:#3a3a44;">Layers</div>
<div class="t" style="left:800px;width:200px;text-align:center;top:95.7px;font-size:11.4px;color:#3a3a44;">Groups</div>
<svg class="a" style="left:700px;top:56px" width="34" height="34" viewBox="0 0 34 34"><defs><radialGradient id="gview" cx="0.4" cy="0.35" r="0.7"><stop offset="0" stop-color="#fafafa"/><stop offset="1" stop-color="#b8bac0"/></radialGradient></defs><circle cx="15" cy="15" r="13" fill="url(#gview)" stroke="#444" stroke-width="1.1"/><path d="M4,10 Q16,14 25,26 M8,26 Q12,10 26,8" stroke="#888" stroke-width="0.8" fill="none"/><path d="M30,17 L21,26" stroke="#e8d0a0" stroke-width="4"/><path d="M22,25 Q17,27 16,31 Q22,32 24,27Z" fill="#9a5a20"/></svg>
<svg class="a" style="left:762px;top:56px" width="32" height="32" viewBox="0 0 32 32"><path d="M2,9 L9,2 H29 V22 L22,29 H2 Z" fill="#fff" stroke="#1e3a5a" stroke-width="1.2" stroke-linejoin="round"/><path d="M2,9 H22 V29 H2Z" fill="#8cc4ec"/><path d="M2,29 L22,9 V29Z" fill="#fff"/><path d="M22,9 L29,2 V22 L22,29Z" fill="#6aaee0"/><path d="M9,2 H29 L22,9 H2Z" fill="#a8d4f4"/><g stroke="#1e3a5a" stroke-width="0.9" fill="none"><path d="M2,9 H22 V29 M22,9 L29,2"/><path d="M12,9 V29 M2,19 H22"/><path d="M5.5,5.5 H25.5 M12,9 L19,2 M22,19 L29,12 M25.5,5.5 V25.5"/><path d="M5,9 V29 M8.5,9 V29 M15.5,9 V19 M2,12.5 H22 M2,15.5 H12" stroke-width="0.5"/></g></svg>
<svg class="a" style="left:822px;top:57px" width="34" height="32" viewBox="0 0 34 32"><g fill="#f2f2f2" stroke="#555" stroke-width="0.9"><path d="M2,19 L10,15 H22 L15,19Z"/><path d="M2,13 L10,9 H22 L15,13Z"/><path d="M2,7 L10,3 H22 L15,7Z"/></g><rect x="17" y="12" width="13" height="17" fill="#fff" stroke="#333" stroke-width="1.1"/><rect x="19" y="15" width="5" height="4" fill="#2a5aa0"/><path d="M19,22 H28 M19,25 H28" stroke="#555" stroke-width="0.8"/></svg>
<svg class="a" style="left:883px;top:57px" width="34" height="32" viewBox="0 0 34 32"><rect x="2" y="2" width="16" height="28" fill="none" stroke="#334" stroke-width="0.8" stroke-dasharray="1.5,1"/><rect x="4" y="4" width="11" height="10" fill="#f4e9a0" stroke="#333" stroke-width="1"/><circle cx="9.5" cy="22" r="5" fill="#e6e8ec" stroke="#333" stroke-width="1"/><path d="M20,5 L31,15 H26 L29,22 L26,23 L23,17 L20,20 Z" fill="#f4f4ee" stroke="#333" stroke-width="0.9"/></svg>
<div class="a" style="left:4px;top:151px;width:934px;height:5px;background:#5e5e5e"></div>
<div class="a" style="left:4px;top:156px;width:934px;height:2px;background:#a6a6a6"></div>
<div class="a" style="left:6px;top:158px;width:932px;height:563px;background:#000"></div>
<div class="a" style="left:4px;top:151px;width:1px;height:587px;background:#8c8c8c"></div>
<div class="a" style="left:5px;top:158px;width:1px;height:563px;background:#b8b8b8"></div>
<div class="t" style="left:11px;top:164.8px;font-size:12px;color:#e0e0e0;">[−][SE Isometric][2D Wireframe]</div>
<svg class="a" style="left:0;top:0" width="938" height="768" viewBox="0 0 938 768">
   <g stroke="#f0f0f0" stroke-width="1.1" fill="none" stroke-linecap="round" stroke-linejoin="round">
    <polyline points="513,243.8 603.4,191.7 695.2,244.5 603.4,296.7 513,243.8 442.9,310.8 249.3,422.1 249.3,563.8 447.3,677.7 733.2,512.5 733.4,371.7 695.2,350.6 695.2,244.5"/>
    <polyline points="603.4,296.7 603.4,401.7 442.9,310.8"/>
    <polyline points="603.4,401.7 695.2,350.6"/>
    <polyline points="733.4,371.7 447.1,536.5 447.3,677.7"/>
    <polyline points="447.1,536.5 409.7,515.4"/>
    <polyline points="249.3,422.1 287.9,443.7 424.6,365.4 546.3,435.4 344.6,548 287.9,443.7"/>
    <polyline points="424.6,365.4 481.3,468"/>
    <polyline points="546.3,435.4 409.7,515.4 350,546"/>
    <polyline points="23.4,688 23.4,648"/>
    <polyline points="23.4,688 57.8,668.4"/>
    <polyline points="23.4,688 57.8,707.5"/>
    <polyline points="17.5,688 23.4,684.5 29.3,688 23.4,691.5 17.5,688"/>
    <polyline points="28.5,633.5 40.5,633.5 28.5,645.5 40.5,645.5"/>
    <polyline points="60,650.5 66.5,657 73,650.5"/>
    <polyline points="66.5,657 66.5,663.5"/>
    <polyline points="63.5,695 76,707"/>
    <polyline points="76,695 63.5,707"/>
   </g>
  </svg>
<svg class="a" style="left:880px;top:205px" width="58" height="130" viewBox="0 0 58 130">
      <path fill-rule="evenodd" d="M12,62 A53,34 0 1 0 118,62 A53,34 0 1 0 12,62 Z M27,64 A38,21 0 1 0 103,64 A38,21 0 1 0 27,64 Z" fill="#3d3d3d"/>
      <path d="M33,24 L58,12 V70 L33,56 Z" fill="#bdbdbd"/>
      <path d="M33,24 L58,12 V15 L36,26 Z" fill="#e0e0e0"/>
      <path d="M33,24 V56" stroke="#8a8a8a" stroke-width="0.8"/>
      <text x="36" y="44" font-family="Liberation Sans" font-weight="bold" font-size="6" fill="#444" transform="rotate(22 36 44)">FRONT</text>
      <text x="24" y="45" font-family="Liberation Sans" font-weight="bold" font-size="10" fill="#c8c8c8" transform="rotate(-30 24 45)">W</text>
      <text x="17" y="86" font-family="Liberation Sans" font-weight="bold" font-size="11" fill="#c8c8c8" transform="rotate(-20 17 86)">S</text>
      <rect x="36" y="110" width="30" height="17" rx="3" fill="#5c5c5c" stroke="#9a9a9a" stroke-width="1"/>
      <text x="40" y="123" font-family="Liberation Sans" font-size="11" fill="#d0d0d0">WC</text>
    </svg>
<div class="a" style="left:5px;top:721px;width:933px;height:15px;background:#f6f6f6"></div>
<div class="a" style="left:6px;top:721px;width:15px;height:15px;background:#fbfbfb;border:1px solid #c8c8c8"></div>
<div class="a" style="left:21px;top:721px;width:15px;height:15px;background:#fbfbfb;border:1px solid #c8c8c8"></div>
<div class="a" style="left:36px;top:721px;width:15px;height:15px;background:#fbfbfb;border:1px solid #c8c8c8"></div>
<div class="a" style="left:51px;top:721px;width:15px;height:15px;background:#fbfbfb;border:1px solid #c8c8c8"></div>
<svg class="a" style="left:6px;top:721px" width="60" height="15" viewBox="0 0 60 15"><g fill="#777"><rect x="4.5" y="4" width="1.5" height="8"/><path d="M12,4 L7,8 L12,12Z"/><path d="M26,4 L21,8 L26,12Z"/><path d="M38,4 L43,8 L38,12Z"/><path d="M53,4 L58,8 L53,12Z"/><rect x="58" y="4" width="1.5" height="8"/></g></svg>
<div class="a" style="left:66px;top:721px;width:52px;height:15px;background:#000;clip-path:polygon(0 0,100% 0,88% 100%,10% 100%)"></div>
<div class="t" style="left:78px;top:724.4px;font-size:10.2px;color:#f4f4f4;">Model</div>
<svg class="a" style="left:112px;top:721px" width="120" height="15" viewBox="0 0 120 15"><path d="M6,1 L1,14 M60,1 L55,14 M116,1 L111,14" stroke="#555" stroke-width="1" fill="none"/></svg>
<div class="t" style="left:124.4px;top:724.3px;font-size:10.3px;color:#111;">Layout1</div>
<div class="t" style="left:179.5px;top:724.3px;font-size:10.3px;color:#111;">Layout2</div>
<div class="a" style="left:4px;top:736px;width:934px;height:2px;background:#333"></div>
<div class="a" style="left:4px;top:738px;width:934px;height:21px;background:#b4b4b4"></div>
<div class="a" style="left:4px;top:738px;width:181.5px;height:21px;background:linear-gradient(#8e8e8e,#a6a6a6 30%,#b2b2b2 60%,#a2a2a2)"></div>
<div class="t" style="left:17.2px;top:745.5px;font-size:10.8px;color:#111;">107.1390, 88.9274, 0.0000</div>
<div class="a" style="left:185.5px;top:739px;width:37.5px;height:20px;background:linear-gradient(#d6d6d6,#c8c8c8 50%,#b8b8b8);border-right:1px solid #8a8a8a"></div>
<div class="t" style="left:104.25px;width:200px;text-align:center;top:744.7px;font-size:10.8px;color:#1a1a1a;">INFER</div>
<div class="a" style="left:223px;top:739px;width:35.80000000000001px;height:20px;background:linear-gradient(#d6d6d6,#c8c8c8 50%,#b8b8b8);border-right:1px solid #8a8a8a"></div>
<div class="t" style="left:140.9px;width:200px;text-align:center;top:744.7px;font-size:10.8px;color:#1a1a1a;">SNAP</div>
<div class="a" style="left:258.8px;top:739px;width:33.19999999999999px;height:20px;background:linear-gradient(#d6d6d6,#c8c8c8 50%,#b8b8b8);border-right:1px solid #8a8a8a"></div>
<div class="t" style="left:175.39999999999998px;width:200px;text-align:center;top:744.7px;font-size:10.8px;color:#1a1a1a;">GRID</div>
<div class="a" style="left:292px;top:739px;width:44.5px;height:20px;background:linear-gradient(#cfeaf6,#e4f4fb 40%,#a8d6ec);border-right:1px solid #8a8a8a"></div>
<div class="t" style="left:214.25px;width:200px;text-align:center;top:744.7px;font-size:10.8px;color:#1a1a1a;">ORTHO</div>
<div class="a" style="left:336.5px;top:739px;width:42.30000000000001px;height:20px;background:linear-gradient(#d6d6d6,#c8c8c8 50%,#b8b8b8);border-right:1px solid #8a8a8a"></div>
<div class="t" style="left:257.65px;width:200px;text-align:center;top:744.7px;font-size:10.8px;color:#1a1a1a;">POLAR</div>
<div class="a" style="left:378.8px;top:739px;width:42.19999999999999px;height:20px;background:linear-gradient(#cfeaf6,#e4f4fb 40%,#a8d6ec);border-right:1px solid #8a8a8a"></div>
<div class="t" style="left:299.9px;width:200px;text-align:center;top:744.7px;font-size:10.8px;color:#1a1a1a;">OSNAP</div>
<div class="a" style="left:421px;top:739px;width:58px;height:20px;background:linear-gradient(#d6d6d6,#c8c8c8 50%,#b8b8b8);border-right:1px solid #8a8a8a"></div>
<div class="t" style="left:350.0px;width:200px;text-align:center;top:744.7px;font-size:10.8px;color:#1a1a1a;">3DOSNAP</div>
<div class="a" style="left:479px;top:739px;width:49.5px;height:20px;background:linear-gradient(#d6d6d6,#c8c8c8 50%,#b8b8b8);border-right:1px solid #8a8a8a"></div>
<div class="t" style="left:403.75px;width:200px;text-align:center;top:744.7px;font-size:10.8px;color:#1a1a1a;">OTRACK</div>
<div class="a" style="left:528.5px;top:739px;width:36.10000000000002px;height:20px;background:linear-gradient(#d6d6d6,#c8c8c8 50%,#b8b8b8);border-right:1px solid #8a8a8a"></div>
<div class="t" style="left:446.54999999999995px;width:200px;text-align:center;top:744.7px;font-size:10.8px;color:#1a1a1a;">DUCS</div>
<div class="a" style="left:564.6px;top:739px;width:28.899999999999977px;height:20px;background:linear-gradient(#d6d6d6,#c8c8c8 50%,#b8b8b8);border-right:1px solid #8a8a8a"></div>
<div class="t" style="left:479.04999999999995px;width:200px;text-align:center;top:744.7px;font-size:10.8px;color:#1a1a1a;">DYN</div>
<div class="a" style="left:593.5px;top:739px;width:30.0px;height:20px;background:linear-gradient(#d6d6d6,#c8c8c8 50%,#b8b8b8);border-right:1px solid #8a8a8a"></div>
<div class="t" style="left:508.5px;width:200px;text-align:center;top:744.7px;font-size:10.8px;color:#1a1a1a;">LWT</div>
<div class="a" style="left:623.5px;top:739px;width:26.5px;height:20px;background:linear-gradient(#cfeaf6,#e4f4fb 40%,#a8d6ec);border-right:1px solid #8a8a8a"></div>
<div class="t" style="left:536.75px;width:200px;text-align:center;top:744.7px;font-size:10.8px;color:#1a1a1a;">TPY</div>
<div class="a" style="left:650px;top:739px;width:21.5px;height:20px;background:linear-gradient(#d6d6d6,#c8c8c8 50%,#b8b8b8);border-right:1px solid #8a8a8a"></div>
<div class="t" style="left:560.75px;width:200px;text-align:center;top:744.7px;font-size:10.8px;color:#1a1a1a;">QP</div>
<div class="a" style="left:671.5px;top:739px;width:20.0px;height:20px;background:linear-gradient(#d6d6d6,#c8c8c8 50%,#b8b8b8);border-right:1px solid #8a8a8a"></div>
<div class="t" style="left:581.5px;width:200px;text-align:center;top:744.7px;font-size:10.8px;color:#1a1a1a;">SC</div>
<div class="a" style="left:691.5px;top:739px;width:21.5px;height:20px;background:linear-gradient(#d6d6d6,#c8c8c8 50%,#b8b8b8);border-right:1px solid #8a8a8a"></div>
<div class="t" style="left:602.25px;width:200px;text-align:center;top:744.7px;font-size:10.8px;color:#1a1a1a;">AM</div>
<div class="a" style="left:713px;top:739px;width:9px;height:20px;background:linear-gradient(90deg,#7a7a7a,#9a9a9a)"></div>
<div class="a" style="left:722px;top:739px;width:43px;height:20px;background:linear-gradient(#d6d6d6,#c8c8c8 50%,#b8b8b8);border-right:1px solid #8a8a8a"></div>
<div class="a" style="left:765px;top:739px;width:23.700000000000045px;height:20px;background:linear-gradient(#d6d6d6,#c8c8c8 50%,#b8b8b8);border-right:1px solid #8a8a8a"></div>
<div class="a" style="left:788.7px;top:739px;width:21.299999999999955px;height:20px;background:linear-gradient(#d6d6d6,#c8c8c8 50%,#b8b8b8);border-right:1px solid #8a8a8a"></div>
<div class="a" style="left:822.5px;top:739px;width:51.0px;height:20px;background:linear-gradient(#d6d6d6,#c8c8c8 50%,#b8b8b8);border-right:1px solid #8a8a8a"></div>
<div class="a" style="left:873.5px;top:739px;width:21.5px;height:20px;background:linear-gradient(#d6d6d6,#c8c8c8 50%,#b8b8b8);border-right:1px solid #8a8a8a"></div>
<div class="a" style="left:895px;top:739px;width:12.5px;height:20px;background:linear-gradient(#d6d6d6,#c8c8c8 50%,#b8b8b8);border-right:1px solid #8a8a8a"></div>
<div class="t" style="left:643.5px;width:200px;text-align:center;top:744.7px;font-size:10.8px;color:#1a1a1a;">MODEL</div>
<div class="a" style="left:810px;top:739px;width:12.5px;height:20px;background:#8a8a8a"></div>
<svg class="a" style="left:765px;top:739px" width="143" height="20" viewBox="0 0 143 20">
      <rect x="5" y="3" width="12" height="11" fill="#fff" stroke="#222" stroke-width="1.1"/><path d="M8,12 L8,6 L13,12Z" fill="none" stroke="#222"/><path d="M3,17 H19" stroke="#333" stroke-width="1.5"/>
      <rect x="27" y="3" width="7" height="7" fill="#eee" stroke="#222"/><rect x="35" y="3" width="7" height="7" fill="#eee" stroke="#222"/><path d="M26,16 H43" stroke="#333" stroke-width="2.2" stroke-linecap="round"/>
      <path d="M67,3 L69,10 L75,15 L68,13 L62,16 L67,10 Z" fill="#fff" stroke="#333" stroke-width="1"/>
      <text x="77" y="15" font-family="Liberation Sans" font-size="12" fill="#111">1:1</text>
      <path d="M95,7 h8 l-4,5z" fill="#111"/>
      <path d="M118,3 L120,10 L126,15 L119,13 L113,16 L118,10 Z" fill="#fff" stroke="#333" stroke-width="1"/><circle cx="124" cy="13" r="3" fill="#f4b840"/>
      <path d="M132,14 L136,5 L139,8 L134,16" fill="#ddd" stroke="#aaa"/>
    </svg>
<div class="a" style="left:907.5px;top:739px;width:31px;height:20px;background:linear-gradient(#bcbcbc,#a0a0a0);border-left:1px solid #444"></div>
<svg class="a" style="left:908px;top:739px" width="30" height="20" viewBox="0 0 30 20"><path d="M3,9 H20 V17 H3Z" fill="#e8c040" stroke="#333" stroke-width="0.8"/><path d="M3,4 H12 L18,9 H3Z" fill="#5a9ad8" stroke="#333" stroke-width="0.8"/><path d="M10,14 L13,17 L20,10" stroke="#2aa02a" stroke-width="2" fill="none"/></svg>
<div class="a" style="left:0;top:759.5px;width:938px;height:6px;background:#ececec"></div>
<div class="a" style="left:0;top:765.5px;width:938px;height:3px;background:#d2bd8c"></div>
<div class="a" style="left:155.5px;top:766px;width:55px;height:2px;background:#efe8d6;border:1px solid #b8a47a;border-bottom:0"></div>
<div class="a" style="left:214px;top:766px;width:66px;height:2px;background:#efe8d6;border:1px solid #b8a47a;border-bottom:0"></div>
<div class="a" style="left:280.6px;top:766px;width:54px;height:2px;background:#efe8d6;border:1px solid #b8a47a;border-bottom:0"></div>
<div class="a" style="left:342px;top:766px;width:59px;height:2px;background:#efe8d6;border:1px solid #b8a47a;border-bottom:0"></div>
<div class="a" style="left:404px;top:766px;width:59px;height:2px;background:#efe8d6;border:1px solid #b8a47a;border-bottom:0"></div>
<div class="a" style="left:938px;top:0;width:422px;height:768px;background:#e1b964"></div>
<div class="a" style="left:938px;top:0;width:422px;height:1px;background:#c9a250"></div>
<div class="a" style="left:938px;top:0;width:1px;height:768px;background:#caa558"></div>
<svg class="a" style="left:947px;top:7px" width="18" height="16" viewBox="0 0 18 16"><g fill="#4a7890"><path d="M1,1 H5 V3 H3 V5 H1Z"/><path d="M17,1 H13 V3 H15 V5 H17Z"/><path d="M1,15 H5 V13 H3 V11 H1Z"/><path d="M17,15 H13 V13 H15 V11 H17Z"/></g><defs><linearGradient id="gpvi" x1="0" y1="0" x2="0" y2="1"><stop offset="0" stop-color="#9fd0ea"/><stop offset="0.45" stop-color="#cfeaf6"/><stop offset="0.6" stop-color="#3a6a70"/><stop offset="1" stop-color="#163238"/></linearGradient></defs><rect x="3.5" y="3.5" width="11" height="9" fill="url(#gpvi)" stroke="#f4fbff" stroke-width="1.3"/></svg>
<div class="t" style="left:1001px;top:8.9px;font-size:14.7px;color:#2b2518;">3d_9.jpg - Windows Photo Viewer</div>
<div class="a" style="left:1266px;top:13px;width:8px;height:2px;background:#1e1a10"></div>
<div class="a" style="left:1292px;top:7px;width:10px;height:8px;border:1px solid #1e1a10;border-top-width:2px"></div>
<div class="a" style="left:1310px;top:1px;width:45px;height:20px;background:#c9504a"></div>
<svg class="a" style="left:1327px;top:5px" width="12" height="12" viewBox="0 0 12 12"><path d="M2,2 L10,10 M10,2 L2,10" stroke="#fff" stroke-width="1.6"/></svg>
<div class="a" style="left:946px;top:31px;width:408px;height:29px;background:linear-gradient(#f8fafd,#e8eef7 40%,#d5e1ef);border-top:1px solid #b8a274;border-bottom:1px solid #a8b4c4"></div>
<div class="t" style="left:964px;top:40.2px;font-size:11.6px;color:#1e2a3a;">File</div>
<div class="t" style="left:1024.2px;top:40.2px;font-size:11.6px;color:#1e2a3a;">Print</div>
<div class="t" style="left:1091.2px;top:40.2px;font-size:11.6px;color:#1e2a3a;">Email</div>
<div class="t" style="left:1150.4px;top:40.2px;font-size:11.6px;color:#1e2a3a;">Burn</div>
<div class="t" style="left:1210px;top:40.2px;font-size:11.6px;color:#1e2a3a;">Open</div>
<div class="a" style="left:998.0px;top:43.5px;width:0;height:0;border-left:3.5px solid transparent;border-right:3.5px solid transparent;border-top:4px solid #1e2a3a"></div>
<div class="a" style="left:1060.9px;top:43.5px;width:0;height:0;border-left:3.5px solid transparent;border-right:3.5px solid transparent;border-top:4px solid #1e2a3a"></div>
<div class="a" style="left:1186.7px;top:43.5px;width:0;height:0;border-left:3.5px solid transparent;border-right:3.5px solid transparent;border-top:4px solid #1e2a3a"></div>
<div class="a" style="left:1249.6px;top:43.5px;width:0;height:0;border-left:3.5px solid transparent;border-right:3.5px solid transparent;border-top:4px solid #1e2a3a"></div>
<svg class="a" style="left:1327px;top:35px" width="18" height="18" viewBox="0 0 18 18"><defs><radialGradient id="ghelp" cx="0.4" cy="0.3" r="0.7"><stop offset="0" stop-color="#6a9ae8"/><stop offset="1" stop-color="#1a3a9a"/></radialGradient></defs><circle cx="9" cy="9" r="8" fill="url(#ghelp)" stroke="#5a6a7a" stroke-width="1"/><text x="9" y="13.5" font-family="Liberation Sans" font-weight="bold" font-size="12" text-anchor="middle" fill="#fff">?</text></svg>
<div class="a" style="left:946px;top:60px;width:408px;height:643px;background:#eef2f9"></div>
<div class="a" style="left:946px;top:196px;width:408px;height:370px;background:#ffffff"></div>
<div class="a" style="left:946px;top:703px;width:408px;height:1px;background:#c6a660"></div>
<div class="a" style="left:945px;top:31px;width:1px;height:673px;background:#b89e68"></div>
<div class="a" style="left:1354px;top:31px;width:1px;height:673px;background:#b09868"></div>
<div class="a" style="left:946px;top:60px;width:1px;height:643px;background:#fbfbf6"></div>
<div class="a" style="left:1353px;top:60px;width:1px;height:643px;background:#fbfbf6"></div>
<svg class="a" style="left:946px;top:196px" width="408" height="370" viewBox="0 0 847 768" preserveAspectRatio="none">
   <g stroke="#0c0c0c" stroke-width="7.8" fill="none" stroke-linecap="round" stroke-linejoin="round">
    <polyline points="423,95 539.7,18.5 664.6,86.3 539.7,160.3 423,95"/>
    <polyline points="423,95 539.7,18.5"/>
    <polyline points="423,95 539.7,160.3 546.8,312 360,215 423,95"/>
    <polyline points="664.6,86.3 676.2,233.6 546.8,312"/>
    <polyline points="676.2,233.6 737.1,270.2 747.2,452.7 376.5,692.1 115.9,561 112.3,375.3 360,215"/>
    <polyline points="112.3,375.3 160,400.5 346.7,285 506.2,364.7 242,531 160,400.5"/>
    <polyline points="346.7,285 422.4,413.4"/>
    <polyline points="319.7,487 368,506 737.1,270.2"/>
    <polyline points="368,506 376.5,692.1"/>
    </g>
   <g stroke="#0c0c0c" stroke-width="4.4" fill="none" stroke-linecap="round"><polyline points="664.6,86.3 812.5,158.7"/><polyline points="792.5,154 794,256"/><polyline points="794,335 802,479"/><polyline points="747.2,452.7 824.3,491.3"/><polyline points="112.3,375.3 44,342"/><polyline points="290.7,256 221,219"/><polyline points="63,349.8 109,320"/><polyline points="169,275.5 240,229.4"/><polyline points="115.9,561 44.4,605.3"/><polyline points="376.5,692.1 296.4,748.3"/><polyline points="71.6,590 196,658"/><polyline points="260.7,692.1 325.4,724.5"/><polyline points="376.5,692.1 454.8,731.3"/><polyline points="802,485.2 651.7,582.6"/><polyline points="593.3,624.4 445.8,719"/><polyline points="242,531 242,590"/><polyline points="242,531 306.6,564.4"/><polyline points="579.4,373.9 576.6,446.3"/><polyline points="579.4,501.9 582.1,560.4"/><polyline points="503.5,343.1 546.8,312"/><polyline points="92.0,601.0 71.6,590.0"/><polyline points="300.0,711.0 325.4,724.5"/><polyline points="780.0,499.0 802.0,485.2"/><polyline points="468.0,705.0 445.8,719.0"/><polyline points="80.0,338.5 63.0,349.8"/><polyline points="222.0,241.0 240.0,229.4"/><polyline points="800.5,440.0 802.0,477.0"/><polyline points="793.0,190.0 792.5,154.0"/><polyline points="579.0,405.0 579.4,373.9"/><polyline points="581.0,530.0 582.1,560.4"/><polyline points="141.0,525.0 115.9,513.3"/><polyline points="212.0,556.0 236.8,567.8"/><polyline points="289.0,524.0 289.6,554.2"/><polyline points="290.0,680.0 289.6,649.5"/><polyline points="177.0,290.0 207.0,310.0"/><polyline points="300.0,359.0 264.0,338.0"/><polyline points="373.8,398.5 415.7,417.4"/><polyline points="504.9,467.4 465.7,448.5"/><polyline points="478.0,310.0 514.3,328.2"/><polyline points="634.0,394.0 587.3,368.8"/><polyline points="512.0,60.0 495.0,49.0"/><polyline points="580.0,98.0 609.0,114.0"/><polyline points="645.0,167.0 669.2,152.6"/><polyline points="568.0,221.0 544.4,234.2"/></g>
   <g fill="#0c0c0c"><path d="M71.6,590.0 L90.5,592.8 L84.4,604.3Z" stroke="none"/><path d="M325.4,724.5 L306.5,721.8 L312.6,710.3Z" stroke="none"/><path d="M802.0,485.2 L790.2,500.3 L783.3,489.3Z" stroke="none"/><path d="M445.8,719.0 L457.6,703.9 L464.5,714.9Z" stroke="none"/><path d="M63.0,349.8 L74.4,334.4 L81.6,345.2Z" stroke="none"/><path d="M240.0,229.4 L228.4,244.6 L221.3,233.7Z" stroke="none"/><path d="M802.0,477.0 L794.8,459.3 L807.8,458.8Z" stroke="none"/><path d="M792.5,154.0 L799.2,171.9 L786.3,172.1Z" stroke="none"/><path d="M579.4,373.9 L585.7,392.0 L572.7,391.8Z" stroke="none"/><path d="M582.1,560.4 L575.0,542.6 L587.9,542.2Z" stroke="none"/><path d="M115.9,513.3 L135.0,515.0 L129.5,526.8Z" stroke="none"/><path d="M236.8,567.8 L217.8,565.9 L223.3,554.2Z" stroke="none"/><path d="M289.6,554.2 L282.7,536.3 L295.7,536.1Z" stroke="none"/><path d="M289.6,649.5 L296.3,667.4 L283.3,667.6Z" stroke="none"/><path d="M207.0,310.0 L188.4,305.4 L195.6,294.6Z" stroke="none"/><path d="M264.0,338.0 L282.8,341.5 L276.3,352.7Z" stroke="none"/><path d="M415.7,417.4 L396.6,415.9 L402.0,404.1Z" stroke="none"/><path d="M465.7,448.5 L484.7,450.5 L479.1,462.2Z" stroke="none"/><path d="M514.3,328.2 L495.3,325.9 L501.1,314.3Z" stroke="none"/><path d="M587.3,368.8 L606.2,371.6 L600.1,383.1Z" stroke="none"/><path d="M495.0,49.0 L513.6,53.3 L506.6,64.2Z" stroke="none"/><path d="M609.0,114.0 L590.1,111.0 L596.4,99.6Z" stroke="none"/><path d="M669.2,152.6 L657.1,167.4 L650.4,156.2Z" stroke="none"/><path d="M544.4,234.2 L556.9,219.7 L563.3,231.1Z" stroke="none"/></g>
   <g fill="#0c0c0c" stroke="#0c0c0c" stroke-width="1.4" font-family="Liberation Sans" font-weight="bold" font-size="42"><text transform="translate(541.3,78.6) rotate(30) scale(0.92,1)" x="0" y="15" text-anchor="middle">24</text><text transform="translate(598.3,197.2) rotate(-30) scale(0.92,1)" x="0" y="15" text-anchor="middle">24</text><text transform="translate(792,294.5) rotate(-90) scale(0.92,1)" x="0" y="15" text-anchor="middle">56</text><text transform="translate(133,295) rotate(-35) scale(0.92,1)" x="0" y="15" text-anchor="middle">36</text><text transform="translate(237,321.5) rotate(58) scale(0.92,1)" x="0" y="15" text-anchor="middle">10</text><text transform="translate(444,431) rotate(58) scale(0.92,1)" x="0" y="15" text-anchor="middle">10</text><text transform="translate(550.8,349.8) rotate(58) scale(0.92,1)" x="0" y="15" text-anchor="middle">12</text><text transform="translate(582.1,471.3) rotate(-90) scale(0.92,1)" x="0" y="15" text-anchor="middle">32</text><text transform="translate(168.7,533.7) rotate(25) scale(0.92,1)" x="0" y="15" text-anchor="middle">25</text><text transform="translate(284.5,601.9) rotate(-75) scale(0.92,1)" x="0" y="15" text-anchor="middle">16</text><text transform="translate(221.5,670) rotate(30) scale(0.92,1)" x="0" y="15" text-anchor="middle">52</text><text transform="translate(621.1,599.3) rotate(-35) scale(0.92,1)" x="0" y="15" text-anchor="middle">75</text></g>
  </svg>
<div class="a" style="left:948.5px;top:719px;width:403px;height:30.5px;border-radius:15px;background:linear-gradient(#e6c682,#e2bd72);border:1px solid #b99a58"></div>
<div class="a" style="left:938px;top:765px;width:422px;height:3px;background:#8e7444"></div>
<svg class='a' style='left:946px;top:706px' width='410' height='52' viewBox='0 -12 410 52'>
      <defs>
        <linearGradient id="gnav" x1="0" y1="0" x2="0" y2="1"><stop offset="0" stop-color="#f6f3ea"/><stop offset="0.45" stop-color="#d8d0b8"/><stop offset="0.55" stop-color="#b8a880"/><stop offset="1" stop-color="#d8c8a0"/></linearGradient>
        <linearGradient id="gbig" x1="0" y1="0" x2="0" y2="1"><stop offset="0" stop-color="#d0d4ff"/><stop offset="0.3" stop-color="#5a70f0"/><stop offset="0.55" stop-color="#0a28c8"/><stop offset="0.8" stop-color="#1050e0"/><stop offset="1" stop-color="#60d0ff"/></linearGradient>
      </defs>
      <rect x="131" y="4.5" width="51" height="24" rx="10" fill="url(#gnav)" stroke="#7a6a48" stroke-width="1"/>
      <rect x="225" y="4.5" width="51" height="24" rx="10" fill="url(#gnav)" stroke="#7a6a48" stroke-width="1"/>
      <circle cx="204" cy="16" r="24.5" fill="#dcbc78" stroke="#b89a58" stroke-width="1"/>
      <circle cx="204" cy="16" r="20" fill="url(#gbig)" stroke="#6a6a8a" stroke-width="0.8"/>
      <rect x="193" y="7" width="22" height="17" rx="1.5" fill="#f4f6f8" stroke="#c8d0d8" stroke-width="0.8"/>
      <rect x="196" y="10" width="16" height="11" fill="#9ac8c8"/><path d="M196,16 Q202,13 207,16 T212,15 V21 H196Z" fill="#4a7a78"/>
      <g fill="#1a4ab0">
        <rect x="148.4" y="10" width="3.4" height="12" rx="1"/><path d="M163.5,10 L152,16 L163.5,22Z"/>
        <rect x="255" y="10" width="3.4" height="12" rx="1"/><path d="M243.5,10 L255,16 L243.5,22Z"/>
      </g>
      <circle cx="41.5" cy="14" r="5.8" fill="#fff" fill-opacity="0.25" stroke="#1a4ab0" stroke-width="2.6"/><path d="M37.2,18.5 L31.5,24.5" stroke="#1a3a90" stroke-width="3.4" stroke-linecap="round"/><path d="M38.5,14 H44.5 M41.5,11 V17" stroke="#1a4ab0" stroke-width="2"/>
      <path d="M53.5,15 h7 l-3.5,4z" fill="#1a4ab0"/>
      <rect x="93.5" y="12" width="11" height="8" fill="#1a4ab0"/><rect x="96.5" y="14.5" width="5" height="3" fill="#e8eef8"/>
      <path d="M99,6.5 L96,9.5 H102Z M99,25.5 L96,22.5 H102Z M88.5,16 L91.5,13 V19Z M109.5,16 L106.5,13 V19Z" fill="#1a4ab0"/>
      <path d="M295.5,11.5 A6.5,6.5 0 1 1 294.5,19" fill="none" stroke="#1a4ab0" stroke-width="2.8"/><path d="M292,6 L299,10.5 L292.5,15Z" fill="#1a4ab0"/>
      <path d="M338.5,11.5 A6.5,6.5 0 1 0 339.5,19" fill="none" stroke="#1a4ab0" stroke-width="2.8"/><path d="M342,6 L335,10.5 L341.5,15Z" fill="#1a4ab0"/>
      <path d="M358.5,7 V25" stroke="#b89a58" stroke-width="1"/>
      <path d="M373,9 L387,23 M387,9 L373,23" stroke="#c02828" stroke-width="2"/>
    </svg>
</body></html>
